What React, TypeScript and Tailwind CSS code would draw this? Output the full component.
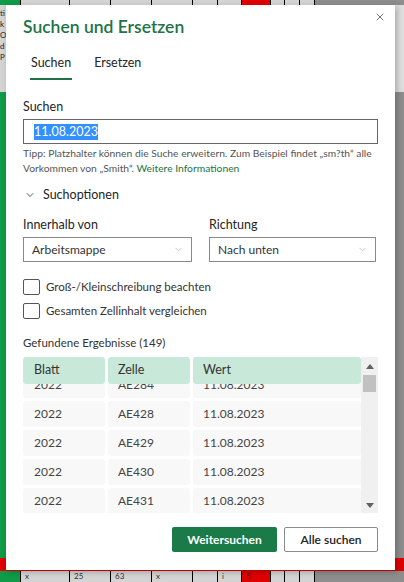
import { ChevronDown, X } from 'lucide-react'

const font = { fontFamily: 'Lato, "Noto Sans", sans-serif' }

const cols = [
  { w: 'w-[21px]', bg: 'bg-[#0f9b48]', t: '' },
  { w: 'w-[49px]', bg: 'bg-[#d4d4d4]', t: 'x' },
  { w: 'w-[41px]', bg: 'bg-[#d4d4d4]', t: '25' },
  { w: 'w-[41px]', bg: 'bg-[#d4d4d4]', t: '63' },
  { w: 'w-[41px]', bg: 'bg-[#d4d4d4]', t: 'x' },
  { w: 'w-[25px]', bg: 'bg-[#d4d4d4]', t: '' },
  { w: 'w-[24px]', bg: 'bg-[#d4d4d4]', t: 'i' },
  { w: 'w-[29px]', bg: 'bg-[#e00000]', t: '5' },
  { w: 'w-[14px]', bg: 'bg-[#d4d4d4]', t: '' },
  { w: 'w-[15px]', bg: 'bg-[#d4d4d4]', t: '' },
  { w: 'w-[15px]', bg: 'bg-[#d4d4d4]', t: '' },
]

const rows = [
  ['2022', 'AE284', '11.08.2023'],
  ['2022', 'AE428', '11.08.2023'],
  ['2022', 'AE429', '11.08.2023'],
  ['2022', 'AE430', '11.08.2023'],
  ['2022', 'AE431', '11.08.2023'],
]

function CellStrip({ h, showText }: { h: string; showText?: boolean }) {
  return (
    <div className={`flex ${h} bg-[#8e8e8e] overflow-hidden`}>
      {cols.map((c, i) => (
        <div key={i} className={`${c.w} ${c.bg} border-r border-black text-[8px] leading-[10px] text-[#333] pl-1 shrink-0`}>
          {showText ? c.t : ''}
        </div>
      ))}
    </div>
  )
}

export default function App() {
  return (
    <div className="relative w-[404px] h-[582px] overflow-hidden bg-[#8e8e8e]" style={font}>
      {/* spreadsheet behind the dialog */}
      <div className="flex flex-col h-full">
        <CellStrip h="h-[5px]" />
        <div className="flex h-[87px] justify-between">
          <div className="w-[6px] bg-[#d4d4d4] text-[8px] leading-[11px] text-[#222] overflow-hidden pt-[3px]">
            ti<br />k<br />O<br />d<br />P
          </div>
          <div className="w-[9px] bg-[#dedede]" />
        </div>
        <div className="flex h-[466px] justify-between">
          <div className="w-[6px] bg-[#0f9b48]" />
          <div className="w-[9px] bg-[#8e8e8e]" />
        </div>
        <div className="h-[13px] bg-[#e00000]" />
        <CellStrip h="h-[11px]" showText />
      </div>

      {/* dialog */}
      <div className="absolute left-[6px] top-[5px] w-[389px] h-[565px] bg-white shadow-[2px_2px_6px_rgba(0,0,0,0.25)] px-[17px] pt-[10px] flex flex-col">
        <button className="absolute right-[9px] top-[6px] text-[#444]">
          <X className="w-[12px] h-[12px]" strokeWidth={1.5} />
        </button>
        <h1 className="text-[17.5px] leading-[24px] font-semibold text-[#217346]">Suchen und Ersetzen</h1>

        <div className="flex mt-[16px] ml-[7px] gap-[22px] text-[12.5px] leading-[16px] text-[#252525]">
          <div className="pb-[7px] border-b-2 border-[#217346] px-[1px]">Suchen</div>
          <div className="pb-[7px] border-b-2 border-transparent">Ersetzen</div>
        </div>

        <div className="mt-[19px] text-[12.5px] leading-[16px] text-[#252525]">Suchen</div>
        <div className="mt-[4px] h-[25px] border border-[#666] flex items-center px-[10px]">
          <span className="bg-[#3390ff] text-white text-[12.5px] leading-[16px]">11.08.2023</span>
        </div>
        <p className="mt-[2px] text-[10.3px] leading-[15px] text-[#555]">
          Tipp: Platzhalter können die Suche erweitern. Zum Beispiel findet „sm?th“ alle Vorkommen von „Smith“.{' '}
          <span className="text-[#217346]">Weitere Informationen</span>
        </p>

        <div className="mt-[11px] flex items-center gap-[7px] text-[12.5px] leading-[16px] text-[#252525]">
          <ChevronDown className="w-[12px] h-[12px] ml-[1px]" strokeWidth={1.5} />
          Suchoptionen
        </div>

        <div className="mt-[14px] grid grid-cols-2 gap-x-[17px]">
          <div className="text-[12.5px] leading-[16px] text-[#252525]">Innerhalb von</div>
          <div className="text-[12.5px] leading-[16px] text-[#252525]">Richtung</div>
          <div className="mt-[4px] h-[25px] border border-[#8a8a8a] flex items-center justify-between pl-[8px] pr-[7px] text-[12px] text-[#333]">
            Arbeitsmappe
            <ChevronDown className="w-[11px] h-[11px] text-[#999]" strokeWidth={1.2} />
          </div>
          <div className="mt-[4px] h-[25px] w-[167px] border border-[#8a8a8a] flex items-center justify-between pl-[8px] pr-[7px] text-[12px] text-[#333]">
            Nach unten
            <ChevronDown className="w-[11px] h-[11px] text-[#999]" strokeWidth={1.2} />
          </div>
        </div>

        <div className="mt-[17px] flex flex-col gap-[8px] text-[11.5px] leading-[16px] text-[#333]">
          <label className="flex items-center gap-[6px]">
            <span className="w-[17px] h-[16px] border border-[#555] rounded-[2px]" />
            Groß-/Kleinschreibung beachten
          </label>
          <label className="flex items-center gap-[6px]">
            <span className="w-[17px] h-[16px] border border-[#555] rounded-[2px]" />
            Gesamten Zellinhalt vergleichen
          </label>
        </div>

        <div className="mt-[16px] text-[11.5px] leading-[16px] text-[#333]">Gefundene Ergebnisse (149)</div>

        <div className="mt-[6px] h-[156px] flex">
          <div className="flex-1 flex flex-col">
            <div className="flex gap-[3px] h-[27px] text-[12.5px] text-[#333]">
              <div className="w-[82px] bg-[#c8e9d9] rounded-[3px] flex items-center pl-[11px]">Blatt</div>
              <div className="w-[82px] bg-[#c8e9d9] rounded-[3px] flex items-center pl-[10px]">Zelle</div>
              <div className="flex-1 bg-[#c8e9d9] rounded-[3px] flex items-center pl-[10px]">Wert</div>
            </div>
            <div className="flex-1 overflow-hidden">
              <div className="flex flex-col gap-[3px] -mt-[12px]">
                {rows.map((r, i) => (
                  <div key={i} className="flex gap-[3px] h-[26px] text-[12px] text-[#444]">
                    <div className="w-[82px] bg-[#f8f8f8] rounded-[3px] flex items-center pl-[11px]">{r[0]}</div>
                    <div className="w-[82px] bg-[#f8f8f8] rounded-[3px] flex items-center pl-[10px]">{r[1]}</div>
                    <div className="flex-1 bg-[#f8f8f8] rounded-[3px] flex items-center pl-[10px]">{r[2]}</div>
                  </div>
                ))}
              </div>
            </div>
          </div>
          <div className="w-[17px] bg-[#f0f0f0] flex flex-col items-center">
            <svg width="8" height="5" viewBox="0 0 8 5" className="mt-[7px]">
              <path d="M0 5 L4 0 L8 5 Z" fill="#606060" />
            </svg>
            <div className="mt-[6px] w-[13px] h-[17px] bg-[#c1c1c1]" />
            <div className="flex-1" />
            <svg width="8" height="5" viewBox="0 0 8 5" className="mb-[5px]">
              <path d="M0 0 L4 5 L8 0 Z" fill="#606060" />
            </svg>
          </div>
        </div>

        <div className="mt-[14px] flex justify-end gap-[7px]">
          <button className="h-[25px] w-[105px] bg-[#1a7a48] rounded-[2px] text-white text-[12px] font-bold">Weitersuchen</button>
          <button className="h-[25px] w-[94px] border border-[#8a8a8a] rounded-[2px] text-[#222] text-[12px] font-semibold">Alle suchen</button>
        </div>
      </div>
    </div>
  )
}
